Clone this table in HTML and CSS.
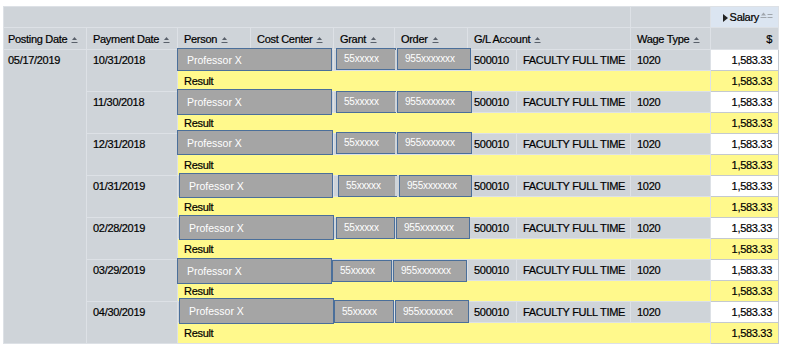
FILE: index.html
```html
<!DOCTYPE html>
<html>
<head>
<meta charset="utf-8">
<link rel="stylesheet" href="styles.css">
</head>
<body>
<table class="grid">
  <colgroup>
    <col class="c-post"><col class="c-pay"><col class="c-person"><col class="c-cost"><col class="c-grant"><col class="c-order"><col class="c-gl"><col class="c-gltext"><col class="c-wage"><col class="c-amt">
  </colgroup>
  <thead>
    <tr class="h1">
      <th colspan="8"></th>
      <th></th>
      <th class="salary"><svg class="play" width="5" height="8" viewBox="0 0 5 8"><path d="M0 0L5 4L0 8Z"/></svg>Salary<svg class="sorts" width="13" height="8" viewBox="0 0 13 8"><path class="tri" d="M1 3.5L3.5 0.5L6 3.5Z"/><path class="ln" d="M0.5 5.5h6M7.5 2.5h5M7.5 5.5h5"/></svg></th>
    </tr>
    <tr class="h2">
      <th class="first">Posting Date<svg class="sort" width="7" height="8" viewBox="0 0 7 8"><path class="tri" d="M1 4L3.5 1L6 4Z"/><path class="ln" d="M0.5 6.5h6"/></svg></th>
      <th>Payment Date<svg class="sort" width="7" height="8" viewBox="0 0 7 8"><path class="tri" d="M1 4L3.5 1L6 4Z"/><path class="ln" d="M0.5 6.5h6"/></svg></th>
      <th>Person<svg class="sort" width="7" height="8" viewBox="0 0 7 8"><path class="tri" d="M1 4L3.5 1L6 4Z"/><path class="ln" d="M0.5 6.5h6"/></svg></th>
      <th>Cost Center<svg class="sort" width="7" height="8" viewBox="0 0 7 8"><path class="tri" d="M1 4L3.5 1L6 4Z"/><path class="ln" d="M0.5 6.5h6"/></svg></th>
      <th>Grant<svg class="sort" width="7" height="8" viewBox="0 0 7 8"><path class="tri" d="M1 4L3.5 1L6 4Z"/><path class="ln" d="M0.5 6.5h6"/></svg></th>
      <th>Order<svg class="sort" width="7" height="8" viewBox="0 0 7 8"><path class="tri" d="M1 4L3.5 1L6 4Z"/><path class="ln" d="M0.5 6.5h6"/></svg></th>
      <th colspan="2">G/L Account<svg class="sort" width="7" height="8" viewBox="0 0 7 8"><path class="tri" d="M1 4L3.5 1L6 4Z"/><path class="ln" d="M0.5 6.5h6"/></svg></th>
      <th>Wage Type<svg class="sort" width="7" height="8" viewBox="0 0 7 8"><path class="tri" d="M1 4L3.5 1L6 4Z"/><path class="ln" d="M0.5 6.5h6"/></svg></th>
      <th class="num">$</th>
    </tr>
  </thead>
  <tbody>
    <tr class="data g1">
      <td rowspan="14" class="top first">05/17/2019</td>
      <td rowspan="2" class="top">10/31/2018</td>
      <td class="anchor"><div class="mask m-person">Professor X</div></td><td></td>
      <td class="anchor"><div class="mask m-grant">55xxxxx</div></td>
      <td class="anchor"><div class="mask m-order">955xxxxxxx</div></td>
      <td>500010</td><td class="gltext">FACULTY FULL TIME</td><td>1020</td><td class="num amt">1,583.33</td>
    </tr>
    <tr class="res"><td colspan="7">Result</td><td class="num">1,583.33</td></tr>

    <tr class="data g2">
      <td rowspan="2" class="top">11/30/2018</td>
      <td class="anchor"><div class="mask m-person">Professor X</div></td><td></td>
      <td class="anchor"><div class="mask m-grant">55xxxxx</div></td>
      <td class="anchor"><div class="mask m-order">955xxxxxxx</div></td>
      <td>500010</td><td class="gltext">FACULTY FULL TIME</td><td>1020</td><td class="num amt">1,583.33</td>
    </tr>
    <tr class="res"><td colspan="7">Result</td><td class="num">1,583.33</td></tr>

    <tr class="data g3">
      <td rowspan="2" class="top">12/31/2018</td>
      <td class="anchor"><div class="mask m-person">Professor X</div></td><td></td>
      <td class="anchor"><div class="mask m-grant">55xxxxx</div></td>
      <td class="anchor"><div class="mask m-order">955xxxxxxx</div></td>
      <td>500010</td><td class="gltext">FACULTY FULL TIME</td><td>1020</td><td class="num amt">1,583.33</td>
    </tr>
    <tr class="res"><td colspan="7">Result</td><td class="num">1,583.33</td></tr>

    <tr class="data g4">
      <td rowspan="2" class="top">01/31/2019</td>
      <td class="anchor"><div class="mask m-person">Professor X</div></td><td></td>
      <td class="anchor"><div class="mask m-grant">55xxxxx</div></td>
      <td class="anchor"><div class="mask m-order">955xxxxxxx</div></td>
      <td>500010</td><td class="gltext">FACULTY FULL TIME</td><td>1020</td><td class="num amt">1,583.33</td>
    </tr>
    <tr class="res"><td colspan="7">Result</td><td class="num">1,583.33</td></tr>

    <tr class="data g5">
      <td rowspan="2" class="top">02/28/2019</td>
      <td class="anchor"><div class="mask m-person">Professor X</div></td><td></td>
      <td class="anchor"><div class="mask m-grant">55xxxxx</div></td>
      <td class="anchor"><div class="mask m-order">955xxxxxxx</div></td>
      <td>500010</td><td class="gltext">FACULTY FULL TIME</td><td>1020</td><td class="num amt">1,583.33</td>
    </tr>
    <tr class="res"><td colspan="7">Result</td><td class="num">1,583.33</td></tr>

    <tr class="data g6">
      <td rowspan="2" class="top">03/29/2019</td>
      <td class="anchor"><div class="mask m-person">Professor X</div></td><td></td>
      <td class="anchor"><div class="mask m-grant">55xxxxx</div></td>
      <td class="anchor"><div class="mask m-order">955xxxxxxx</div></td>
      <td>500010</td><td class="gltext">FACULTY FULL TIME</td><td>1020</td><td class="num amt">1,583.33</td>
    </tr>
    <tr class="res"><td colspan="7">Result</td><td class="num">1,583.33</td></tr>

    <tr class="data g7">
      <td rowspan="2" class="top">04/30/2019</td>
      <td class="anchor"><div class="mask m-person">Professor X</div></td><td></td>
      <td class="anchor"><div class="mask m-grant">55xxxxx</div></td>
      <td class="anchor"><div class="mask m-order">955xxxxxxx</div></td>
      <td>500010</td><td class="gltext">FACULTY FULL TIME</td><td>1020</td><td class="num amt">1,583.33</td>
    </tr>
    <tr class="res"><td colspan="7">Result</td><td class="num">1,583.33</td></tr>
  </tbody>
</table>
</body>
</html>
```
FILE: styles.css
```css
html, body {
  margin: 0;
  padding: 0;
  background: #ffffff;
}

body {
  padding: 6px 0 0 3px;
  font-family: "Liberation Sans", Arial, sans-serif;
  font-size: 11px;
  letter-spacing: -0.3px;
  color: #000;
}

.grid {
  border-collapse: collapse;
  table-layout: fixed;
  width: 776px;
  border-top: 1px solid #a9a9a9;
  border-bottom: 1px solid #a3a3a3;
  border-right: 1px solid #c4c8cd;
  border-left: 1px solid #cfd4d9;
}

.c-post { width: 83px; }
.c-pay { width: 91px; }
.c-person { width: 73px; }
.c-cost { width: 83px; }
.c-grant { width: 61px; }
.c-order { width: 73px; }
.c-gl { width: 49px; }
.c-gltext { width: 114px; }
.c-wage { width: 80px; }
.c-amt { width: 68px; }

th, td {
  height: 20px;
  padding: 0 5px 0 6px;
  line-height: 20px;
  border: 1px solid #dde1e6;
  background: #cfd4d9;
  text-align: left;
  font-weight: normal;
  white-space: nowrap;
  overflow: visible;
  vertical-align: middle;
  color: #000;
  -webkit-text-stroke: 0.2px #000;
}

.h1 th {
  height: 20px;
}

.h2 th {
  height: 21px;
}

th.first, td.first {
  padding-left: 4px;
}

th.num, td.num {
  text-align: right;
  padding-right: 6px;
}

td.top {
  vertical-align: top;
}

th.salary {
  background: #dbe5f1;
  text-align: right;
  padding-right: 5px;
}

.play {
  fill: #222;
  margin-right: 2px;
  vertical-align: -1px;
}

.sorts {
  margin-left: 1px;
  vertical-align: 1px;
}

.sorts .tri { fill: #a0a6ad; }
.sorts .ln { stroke: #a0a6ad; stroke-width: 1; }

.sort {
  margin-left: 4px;
  vertical-align: -1px;
}

.sort .tri { fill: #59606a; }
.sort .ln { stroke: #59606a; stroke-width: 1; }

td.amt {
  background: #ffffff;
  border-color: #c4c9cf;
}

.res td {
  background: #fff98c;
}

.res td.num {
  border-color: #c4c9cf;
}

td.anchor {
  position: relative;
}

.mask {
  position: absolute;
  box-sizing: border-box;
  background: #a5a5a5;
  border: 1px solid #4b6f9a;
  color: #ffffff;
  -webkit-text-stroke: 0;
  letter-spacing: 0;
  font-size: 10.5px;
  line-height: 20px;
  padding-left: 9px;
  white-space: nowrap;
  display: flex;
  align-items: center;
}

.m-grant, .m-order {
  padding-left: 7px;
  font-size: 10px;
  letter-spacing: -0.2px;
}

.m-person {
  left: calc(var(--px, 0px) - 1px);
  top: calc(var(--py, 0px) - 1px);
  width: var(--pw, 155px);
  height: var(--ph, 23px);
}

.m-grant {
  left: calc(var(--gx, 3px) - 1px);
  top: calc(var(--gy, 0px) - 1px);
  width: var(--gw, 60px);
  height: var(--gh, 22px);
}

.m-order {
  left: calc(var(--ox, 3px) - 1px);
  top: calc(var(--oy, 0px) - 1px);
  width: var(--ow, 74px);
  height: var(--oh, 22px);
}

.g1 { --px: 0px; --py: -1px; --ph: 23px; --gy: -1px; --oy: -1px; }
.g2 { --px: 0px; --py: -2px; --ph: 26px; --gy: 0px; --ow: 75px; --oy: 0px; }
.g3 { --px: 0px; --py: -3px; --pw: 156px; --ph: 25px; --gy: -1px; --oy: -1px; --ow: 75px; }
.g4 { --px: 2px; --py: -2px; --pw: 154px; --ph: 25px; --gx: 5px; --gw: 59px; --ox: 5px; --ow: 73px; }
.g5 { --px: 2px; --py: -2px; --ph: 25px; --gw: 59px; --ox: 2px; }
.g6 { --px: 0px; --py: -1px; --ph: 26px; --gx: -1px; --gy: 1px; --ox: -1px; --oy: 1px; }
.g7 { --px: 2px; --py: -3px; --ph: 26px; --gx: 1px; --gy: -1px; --gh: 23px; --ox: 1px; --oy: -1px; --oh: 23px; }
```
